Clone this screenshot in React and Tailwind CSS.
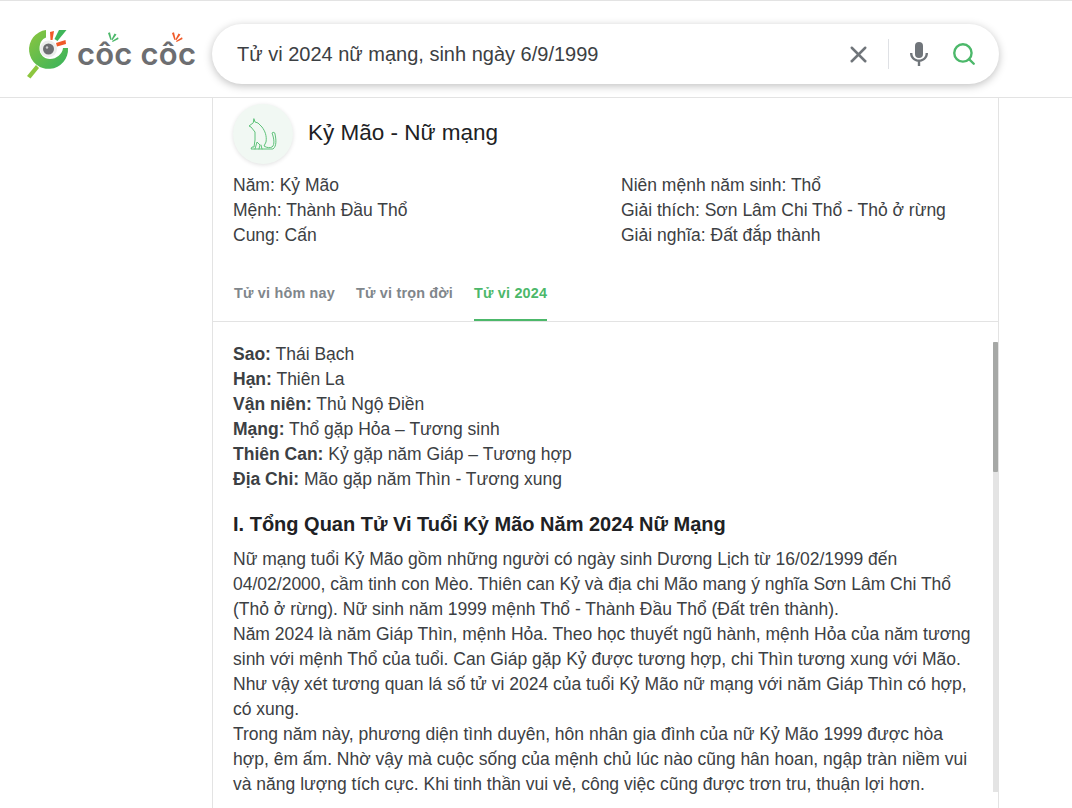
import React from 'react';
import { X, Search } from 'lucide-react';

const Rays = ({ color }) => (
  <svg width="12" height="11" viewBox="0 0 12 11" className="absolute left-[30px] top-[-6px]" fill={color}>
    <path d="M1 1 L3 0.3 L4.6 7.5 L3.4 8 Z" />
    <path d="M7.5 1.5 L9.5 2.5 L5.4 8.3 L4.4 7.6 Z" />
    <path d="M11 5.3 L11.6 7 L5.6 10 L5 8.9 Z" />
  </svg>
);

const Logo = () => (
  <div className="flex items-center w-[212px] shrink-0 pl-[26px]">
    <svg width="44" height="50" viewBox="26 28 44 50" className="shrink-0 mt-[-1px]">
      <defs>
        <linearGradient id="ring" x1="0" y1="0" x2="1" y2="1">
          <stop offset="0" stopColor="#8dc63f" />
          <stop offset="1" stopColor="#35b25c" />
        </linearGradient>
      </defs>
      <path d="M46 29 A19.5 19.5 0 1 0 68 47 L63 47 C62.5 53 56.5 58 50 58 C44 58 39.5 53 39.5 48 C39.5 42 42 38 46 36.5 Z" fill="url(#ring)" />
      <circle cx="48.5" cy="48" r="8.5" fill="#eceeec" />
      <circle cx="48.5" cy="48" r="5.5" fill="#6d6e71" />
      <circle cx="47" cy="46.5" r="1.2" fill="#c9cbcc" />
      <path d="M50 31 L54 30 L52.5 39 L50.5 39 Z" fill="#f15a29" />
      <path d="M59 29 H66.5 L57.5 40 L54.5 38 Z" fill="#3fb65a" />
      <path d="M56 42 L65.5 39 L66 43 L57 45.5 Z" fill="#f15a29" />
      <path d="M36 64 L39 67 L30.5 77.5 L27 75 Z" fill="#8dc63f" />
    </svg>
    <div className="ml-[7px] mt-[-1px] flex gap-[8px] font-['Inter',sans-serif] font-semibold text-[31px] leading-none tracking-[0.2px] text-[#6d6e71]">
      <span className="relative">côc<Rays color="#4cb86a" /></span>
      <span className="relative">côc<Rays color="#f15a29" /></span>
    </div>
  </div>
);

const Cat = () => (
  <svg width="30" height="32" viewBox="0 0 30 32" fill="none" stroke="#5fc27a" strokeWidth="1" strokeLinejoin="round" strokeLinecap="round">
    <path d="M6 1 L7 4 L10 5 L14 9 C17 13 19 18 18 24 L16 28 C19 30 22 30 24 29 C27 27 26 20 24 15 C25 14 27 14 27 16 C28 21 29 28 25 31 H3 L4 29 L6 29 L7 22 L7 14 L3 9 L1 8 L5 5 Z" />
    <path d="M7 31 L9 24 L12 27 L11 31 M14 31 L13 27" />
  </svg>
);

const Tab = ({ label, active }) => (
  <div className={`h-[54px] pt-[14px] border-b-2 text-[14.4px] font-bold leading-[24px] tracking-[0.2px] ${active ? 'border-[#4cb86a] text-[#4cb86a]' : 'border-transparent text-[#80868b]'}`}>
    {label}
  </div>
);

const InfoLine = ({ children }) => <p className="h-[25px] leading-[25px]">{children}</p>;

export default function App() {
  return (
    <div className="h-[808px] w-[1072px] overflow-hidden bg-white font-['Liberation_Sans',sans-serif] text-[#3c4043]">
      <header className="h-[98px] border-t border-b border-[#e3e3e3] flex items-start pt-[23px]">
        <div className="flex items-center h-[60px]">
          <Logo />
        </div>
        <div className="w-[787px] h-[60px] rounded-[30px] bg-white shadow-[0_2px_8px_rgba(0,0,0,0.25)] flex items-center pl-[25px] pr-[22px]">
          <span className="flex-1 text-[20px] text-[#3c4043]">Tử vi 2024 nữ mạng, sinh ngày 6/9/1999</span>
          <X size={27} strokeWidth={2.2} className="text-[#70757a]" />
          <div className="w-px h-[30px] bg-[#dfe1e5] ml-[16px] mr-[18px]" />
          <svg width="24" height="26" viewBox="0 0 24 26" className="mr-[20px]" fill="#70757a">
            <rect x="8" y="1" width="8" height="16" rx="4" />
            <path d="M3 12 H5.4 C5.4 16 8 18.5 12 18.5 C16 18.5 18.6 16 18.6 12 H21 C21 17 17.5 20.2 13.2 20.8 V25 H10.8 V20.8 C6.5 20.2 3 17 3 12 Z" />
          </svg>
          <Search size={26} strokeWidth={2.2} className="text-[#4cb86a]" />
        </div>
      </header>

      <main className="ml-[212px] w-[787px] h-[710px] border-x border-[#e3e3e3] overflow-hidden">
        <div className="flex items-center gap-[15px] pl-[20px] pt-[6px]">
          <div className="w-[60px] h-[60px] rounded-full bg-[#f1f8f3] shadow-[0_1px_4px_rgba(0,0,0,0.12)] flex items-center justify-center">
            <Cat />
          </div>
          <h2 className="text-[22.5px] leading-[32px] text-[#202124] mb-[2px]">Kỷ Mão - Nữ mạng</h2>
        </div>

        <div className="grid grid-cols-[388px_1fr] pl-[20px] mt-[9px] text-[17.5px]">
          <div>
            <InfoLine>Năm: Kỷ Mão</InfoLine>
            <InfoLine>Mệnh: Thành Đầu Thổ</InfoLine>
            <InfoLine>Cung: Cấn</InfoLine>
          </div>
          <div>
            <InfoLine>Niên mệnh năm sinh: Thổ</InfoLine>
            <InfoLine>Giải thích: Sơn Lâm Chi Thổ - Thỏ ở rừng</InfoLine>
            <InfoLine>Giải nghĩa: Đất đắp thành</InfoLine>
          </div>
        </div>

        <nav className="flex gap-[21px] pl-[21px] mt-[14px] border-b border-[#e3e3e3] h-[60px] pt-[5px]">
          <Tab label="Tử vi hôm nay" />
          <Tab label="Tử vi trọn đời" />
          <Tab label="Tử vi 2024" active />
        </nav>

        <div className="flex">
          <div className="w-[770px] pl-[20px] pt-[20px] text-[17.5px] leading-[25px] shrink-0">
            <p><b>Sao:</b> Thái Bạch</p>
            <p><b>Hạn:</b> Thiên La</p>
            <p><b>Vận niên:</b> Thủ Ngộ Điền</p>
            <p><b>Mạng:</b> Thổ gặp Hỏa – Tương sinh</p>
            <p><b>Thiên Can:</b> Kỷ gặp năm Giáp – Tương hợp</p>
            <p><b>Địa Chi:</b> Mão gặp năm Thìn - Tương xung</p>
            <h3 className="mt-[17px] mb-[8px] text-[20px] leading-[30px] font-bold text-[#202124]">I. Tổng Quan Tử Vi Tuổi Kỷ Mão Năm 2024 Nữ Mạng</h3>
            <p>Nữ mạng tuổi Kỷ Mão gồm những người có ngày sinh Dương Lịch từ 16/02/1999 đến<br />04/02/2000, cầm tinh con Mèo. Thiên can Kỷ và địa chi Mão mang ý nghĩa Sơn Lâm Chi Thổ<br />(Thỏ ở rừng). Nữ sinh năm 1999 mệnh Thổ - Thành Đầu Thổ (Đất trên thành).</p>
            <p>Năm 2024 là năm Giáp Thìn, mệnh Hỏa. Theo học thuyết ngũ hành, mệnh Hỏa của năm tương<br />sinh với mệnh Thổ của tuổi. Can Giáp gặp Kỷ được tương hợp, chi Thìn tương xung với Mão.<br />Như vậy xét tương quan lá số tử vi 2024 của tuổi Kỷ Mão nữ mạng với năm Giáp Thìn có hợp,<br />có xung.</p>
            <p>Trong năm này, phương diện tình duyên, hôn nhân gia đình của nữ Kỷ Mão 1999 được hòa<br />hợp, êm ấm. Nhờ vậy mà cuộc sống của mệnh chủ lúc nào cũng hân hoan, ngập tràn niềm vui<br />và năng lượng tích cực. Khi tinh thần vui vẻ, công việc cũng được trơn tru, thuận lợi hơn.</p>
          </div>
          <div className="w-[5px] ml-[10px] mt-[20px] h-[450px] bg-[#e4e4e4] shrink-0">
            <div className="h-[130px] bg-[#a6a8a6] rounded-[1px]" />
          </div>
        </div>
      </main>
    </div>
  );
}
